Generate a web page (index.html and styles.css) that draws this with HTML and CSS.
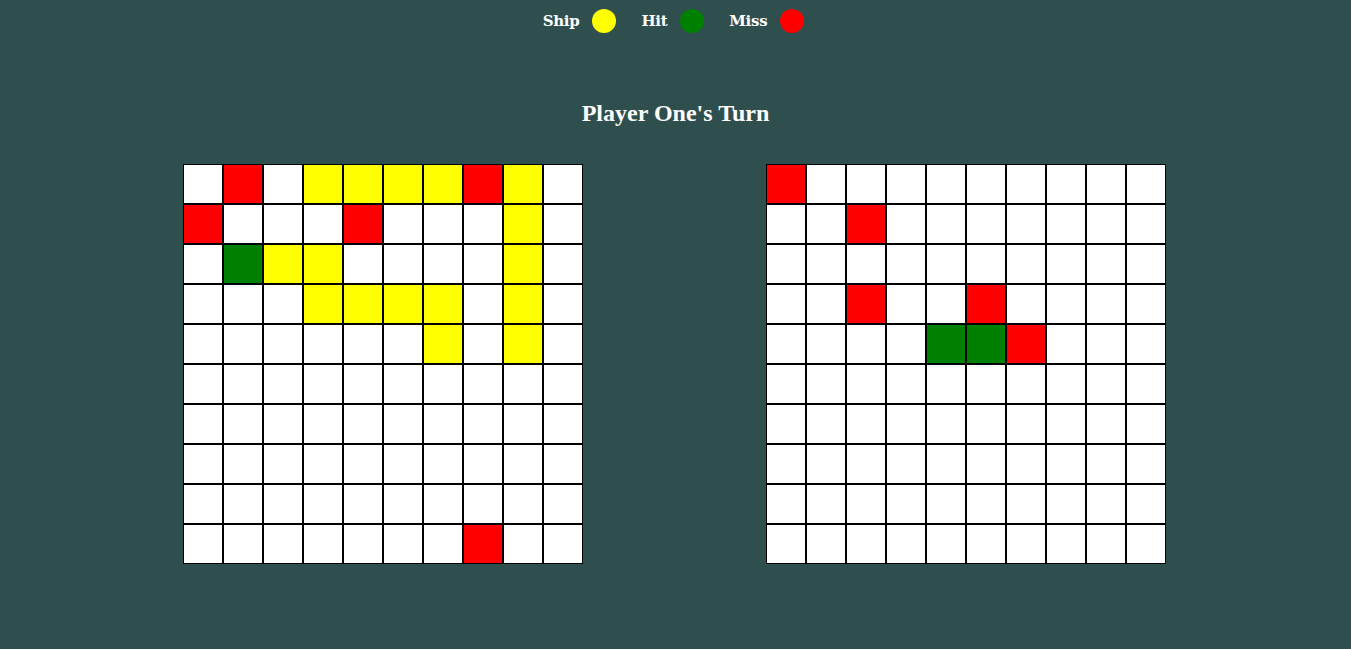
FILE: index.html
```html
<!DOCTYPE html>
<html>
<head>
<meta charset="utf-8">
<title>Battleship</title>
<link rel="stylesheet" href="styles.css">
</head>
<body>
<div class="legend">
  <div class="legend-item"><span class="legend-label">Ship</span><span class="dot dot-ship"></span></div>
  <div class="legend-item"><span class="legend-label">Hit</span><span class="dot dot-hit"></span></div>
  <div class="legend-item"><span class="legend-label">Miss</span><span class="dot dot-miss"></span></div>
</div>
<h1 class="turn">Player One's Turn</h1>
<div class="boards">
  <div class="board" id="board-one"></div>
  <div class="board" id="board-two"></div>
</div>
<script src="script.js"></script>
</body>
</html>
```

FILE: styles.css
```css
html, body {
  margin: 0;
  padding: 0;
}
body {
  background: #2f4f4f;
  min-height: 649px;
  overflow: hidden;
}
.legend {
  display: flex;
  justify-content: center;
  align-items: center;
  gap: 25px;
  padding-top: 9px;
  padding-right: 4px;
}
.legend-item {
  display: flex;
  align-items: center;
  gap: 13px;
}
.legend-label {
  font-family: "DejaVu Serif", "Liberation Serif", serif;
  font-weight: bold;
  font-size: 15px;
  color: #fff;
  letter-spacing: -0.3px;
}
.dot {
  width: 24px;
  height: 24px;
  border-radius: 50%;
  display: block;
}
.dot-ship { background: #ffff00; }
.dot-hit { background: #008000; }
.dot-miss { background: #ff0000; }
.turn {
  margin: 66px 0 0;
  text-align: center;
  font-family: "Liberation Serif", "Times New Roman", serif;
  font-size: 24px;
  font-weight: bold;
  color: #fff;
  line-height: 28px;
}
.boards {
  display: flex;
  justify-content: space-evenly;
  margin-top: 37px;
  padding-right: 2px;
}
.board {
  display: grid;
  grid-template-columns: repeat(10, 40px);
  grid-template-rows: repeat(10, 40px);
}
.cell {
  box-sizing: border-box;
  border: 1px solid #000;
  background: #fff;
}
.cell.ship { background: #ffff00; }
.cell.hit { background: #008000; }
.cell.miss { background: #ff0000; }
```

FILE: script.js
```js
var boardOne = [
  "WRWYYYYRYW",
  "RWWWRWWWYW",
  "WGYYWWWWYW",
  "WWWYYYYWYW",
  "WWWWWWYWYW",
  "WWWWWWWWWW",
  "WWWWWWWWWW",
  "WWWWWWWWWW",
  "WWWWWWWWWW",
  "WWWWWWWRWW"
];
var boardTwo = [
  "RWWWWWWWWW",
  "WWRWWWWWWW",
  "WWWWWWWWWW",
  "WWRWWRWWWW",
  "WWWWGGRWWW",
  "WWWWWWWWWW",
  "WWWWWWWWWW",
  "WWWWWWWWWW",
  "WWWWWWWWWW",
  "WWWWWWWWWW"
];
var cls = { W: "", Y: "ship", G: "hit", R: "miss" };
function fill(id, data) {
  var el = document.getElementById(id);
  data.forEach(function (row) {
    row.split("").forEach(function (c) {
      var d = document.createElement("div");
      d.className = "cell " + cls[c];
      el.appendChild(d);
    });
  });
}
fill("board-one", boardOne);
fill("board-two", boardTwo);
```
